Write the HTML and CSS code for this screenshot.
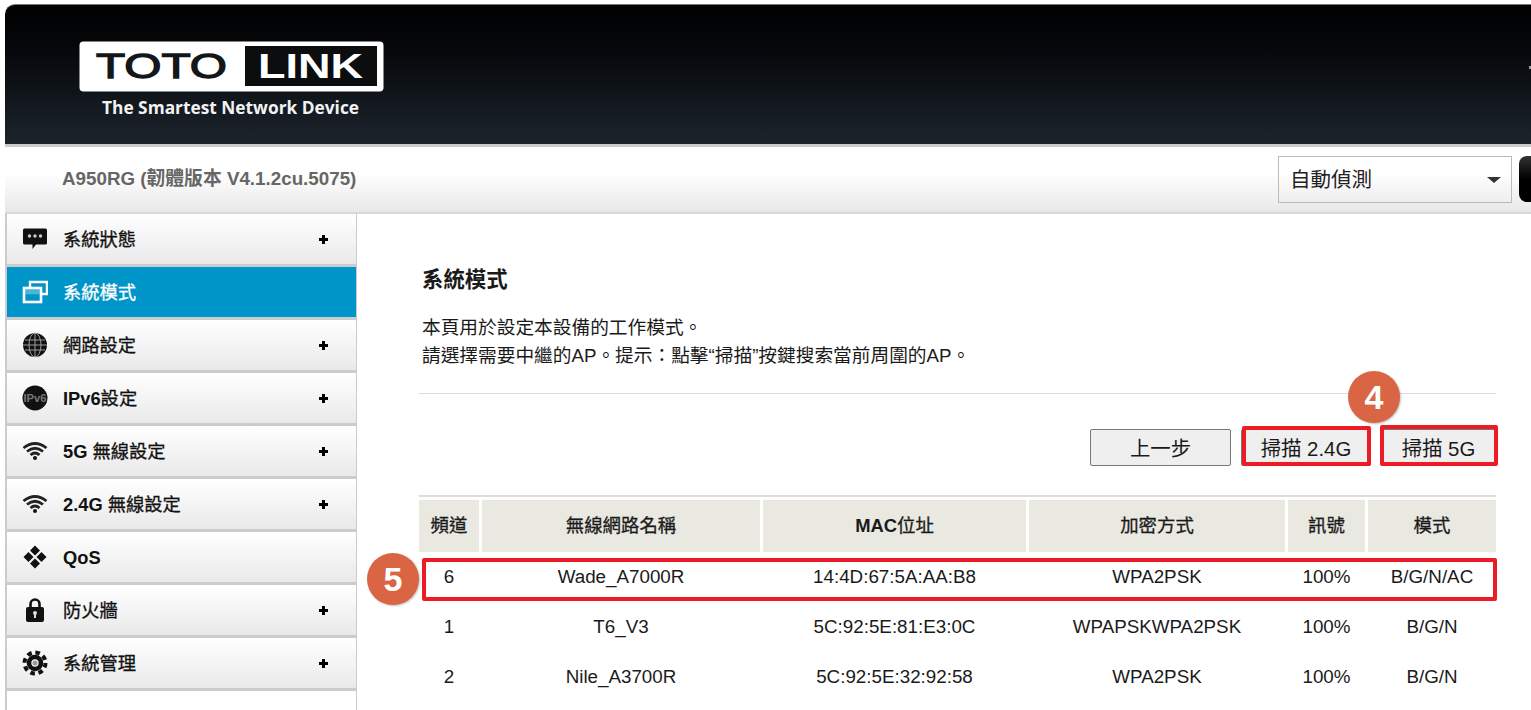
FILE: index.html
```html
<!DOCTYPE html>
<html lang="zh-Hant">
<head>
    <meta charset="UTF-8">
    <title>TOTOLINK A950RG</title>
    <link rel="stylesheet" href="styles.css">
</head>
<body>
<div class="page">
    <header class="top">
        <svg class="logo" width="320" height="84" viewBox="0 0 320 84">
            <rect x="0.5" y="0.5" width="304" height="50" rx="4" fill="#fff"/>
            <rect x="166" y="5" width="132" height="40" fill="#0b0d0f"/>
            <text x="17" y="37" textLength="131" lengthAdjust="spacingAndGlyphs" class="logo-word logo-thin" fill="#14171a" stroke="#14171a">TOTO</text>
            <text x="179" y="37" textLength="105" lengthAdjust="spacingAndGlyphs" class="logo-word" fill="#fff">LINK</text>
            <text x="23" y="73" textLength="257" lengthAdjust="spacingAndGlyphs" class="logo-tag" fill="#f2f2f2">The Smartest Network Device</text>
        </svg>
        <span class="top-mark"></span>
    </header>

    <div class="subbar">
        <span class="version">A950RG (韌體版本 V4.1.2cu.5075)</span>
        <div class="subbar-right">
            <div class="lang">
                <select>
                    <option>自動偵測</option>
                </select>
                <span class="lang-arrow"></span>
            </div>
            <span class="dark-btn"></span>
        </div>
    </div>

    <div class="columns">
        <nav class="menu">
            <a class="menu-item">
                <svg class="icon" viewBox="0 0 26 26"><path d="M2.500 2.500h21a1.500 1.500 0 0 1 1.500 1.500v13a1.500 1.500 0 0 1-1.500 1.500H14l-3.500 4.500v-4.500h-8A1.500 1.500 0 0 1 1 17V4a1.500 1.500 0 0 1 1.500-1.500z"/><g fill="#ccc"><circle cx="7.500" cy="10" r="1.700"/><circle cx="13" cy="10" r="1.700"/><circle cx="18.500" cy="10" r="1.700"/></g></svg>
                <span class="menu-label">系統狀態</span><span class="plus"></span>
            </a>
            <a class="menu-item active">
                <svg class="icon" viewBox="0 0 26 26"><g fill="none" stroke="#fff"><path d="M8 8V3h17v12h-5" stroke-width="2.400"/><rect x="2" y="9" width="17" height="14" stroke-width="2.600"/></g><rect x="3.300" y="10.300" width="14.400" height="5" fill="#fff" opacity=".3"/></svg>
                <span class="menu-label">系統模式</span>
            </a>
            <a class="menu-item">
                <svg class="icon" viewBox="0 0 26 26"><circle cx="13" cy="13" r="12"/><g fill="none" stroke="#aaa" stroke-width=".9"><path d="M1 13h24M3 8h20M3 18h20M13 1v24"/><ellipse cx="13" cy="13" rx="6" ry="12"/></g></svg>
                <span class="menu-label">網路設定</span><span class="plus"></span>
            </a>
            <a class="menu-item">
                <svg class="icon" viewBox="0 0 26 26"><circle cx="13" cy="13" r="12.500"/><text x="13" y="17" text-anchor="middle" textLength="23" lengthAdjust="spacingAndGlyphs" class="ipv6-text">IPv6</text></svg>
                <span class="menu-label"><b>IPv6</b>設定</span><span class="plus"></span>
            </a>
            <a class="menu-item">
                <svg class="icon" viewBox="0 0 26 26"><use href="#wifi"/></svg>
                <span class="menu-label"><b>5G</b> 無線設定</span><span class="plus"></span>
            </a>
            <a class="menu-item">
                <svg class="icon" viewBox="0 0 26 26">
                    <g id="wifi">
                        <g fill="none" stroke="#222" stroke-width="2.800">
                            <path d="M1.500 10Q13 1 24.500 10"/>
                            <path d="M5 13.500Q13 7 21 13.500"/>
                            <path d="M8.500 17Q13 13 17.500 17"/>
                        </g>
                        <circle cx="13" cy="20" r="2"/>
                    </g>
                </svg>
                <span class="menu-label"><b>2.4G</b> 無線設定</span><span class="plus"></span>
            </a>
            <a class="menu-item">
                <svg class="icon" viewBox="0 0 26 26"><path d="M13 1.500l5 5-5 5-5-5zM6.500 8l5 5-5 5-5-5zM19.500 8l5 5-5 5-5-5zM13 14.500l5 5-5 5-5-5z"/></svg>
                <span class="menu-label latin"><b>QoS</b></span>
            </a>
            <a class="menu-item">
                <svg class="icon" viewBox="0 0 26 26"><path d="M8.500 11V7a4.500 4.500 0 0 1 9 0v4" fill="none" stroke="#111" stroke-width="2.600"/><rect x="4" y="10" width="18" height="15" rx="2"/><circle cx="13" cy="16" r="2" fill="#ddd"/><rect x="12" y="16" width="2" height="5" fill="#ddd"/></svg>
                <span class="menu-label">防火牆</span><span class="plus"></span>
            </a>
            <a class="menu-item">
                <svg class="icon" viewBox="0 0 26 26"><circle cx="13" cy="13" r="10.500" fill="none" stroke="#111" stroke-width="4" stroke-dasharray="4.600 3.650"/><circle cx="13" cy="13" r="6" fill="none" stroke="#111" stroke-width="4.600"/><circle cx="13" cy="13" r="2.500" fill="#999"/></svg>
                <span class="menu-label">系統管理</span><span class="plus"></span>
            </a>
        </nav>

        <main class="content">
            <h1 class="title">系統模式</h1>
            <p class="intro">本頁用於設定本設備的工作模式。<br>請選擇需要中繼的AP。提示：點擊“掃描”按鍵搜索當前周圍的AP。</p>
            <hr class="rule">

            <div class="toolbar">
                <span class="step step-4">4</span>
                <button class="btn prev">上一步</button>
                <button class="btn scan24">掃描 2.4G<span class="frame"></span></button>
                <button class="btn scan5">掃描 5G<span class="frame"></span></button>
            </div>

            <hr class="rule rule-table">

            <div class="table-wrap">
                <span class="step step-5">5</span>
                <span class="row-frame"></span>
                <table class="ap-table">
                    <colgroup>
                        <col class="c-ch"><col class="c-ssid"><col class="c-mac"><col class="c-enc"><col class="c-sig"><col class="c-mode">
                    </colgroup>
                    <tr>
                        <th>頻道</th><th>無線網路名稱</th><th><b>MAC</b>位址</th><th>加密方式</th><th>訊號</th><th>模式</th>
                    </tr>
                    <tr>
                        <td>6</td><td>Wade_A7000R</td><td>14:4D:67:5A:AA:B8</td><td>WPA2PSK</td><td>100%</td><td>B/G/N/AC</td>
                    </tr>
                    <tr>
                        <td>1</td><td>T6_V3</td><td>5C:92:5E:81:E3:0C</td><td>WPAPSKWPA2PSK</td><td>100%</td><td>B/G/N</td>
                    </tr>
                    <tr>
                        <td>2</td><td>Nile_A3700R</td><td>5C:92:5E:32:92:58</td><td>WPA2PSK</td><td>100%</td><td>B/G/N</td>
                    </tr>
                </table>
            </div>
        </main>
    </div>
</div>
</body>
</html>
```

FILE: styles.css
```css
* {
    box-sizing: border-box;
}

body {
    margin: 0;
    background: #fff;
    color: #1a1a1a;
    font-family: "Liberation Sans", "Noto Sans CJK TC", sans-serif;
}

.page {
    width: 1531px;
    height: 710px;
    padding: 4px 0 0 5px;
    overflow: hidden;
}

/* black header with the logo */
.top {
    position: relative;
    height: 143px;
    padding: 36px 0 0 74px;
    background: linear-gradient(#000 0%, #05070a 30%, #1c242c 100%);
    border-top: 1px solid #777;
    border-bottom: 3px solid #ccc;
    border-top-left-radius: 10px;
}

.logo {
    display: block;
}

.logo-word {
    font-family: "Liberation Sans", sans-serif;
    font-size: 35px;
    font-weight: bold;
}

.logo-thin {
    font-weight: normal;
    stroke-width: 1.300px;
}

.logo-tag {
    font-family: "Open Sans", sans-serif;
    font-size: 18px;
    font-weight: 700;
}

.top-mark {
    position: absolute;
    right: 0;
    top: 61px;
    width: 2px;
    height: 3px;
    background: #999;
}

/* version bar */
.subbar {
    display: flex;
    align-items: center;
    justify-content: space-between;
    height: 67px;
    padding: 0 0 0 57px;
    background: linear-gradient(#fff 40%, #e8e8e8 100%);
    border-bottom: 2px solid #d8d8d8;
}

.version {
    padding-bottom: 6px;
    color: #666;
    font-size: 18.800px;
    font-weight: bold;
}

.subbar-right {
    display: flex;
    gap: 7px;
    width: 253px;
    margin-top: -1px;
    overflow: hidden;
}

.lang {
    position: relative;
    flex: none;
    width: 234px;
    height: 47px;
}

.lang select {
    width: 100%;
    height: 100%;
    padding: 0 0 0 11px;
    appearance: none;
    background: transparent;
    border: 1px solid #bbb;
    border-radius: 0;
    color: #222;
    font-family: inherit;
    font-size: 20.500px;
}

.lang-arrow {
    position: absolute;
    right: 11px;
    top: 21px;
    border-top: 6px solid #333;
    border-left: 7px solid transparent;
    border-right: 7px solid transparent;
}

.dark-btn {
    flex: none;
    width: 60px;
    height: 46px;
    background: linear-gradient(#333, #000 50%);
    border-radius: 8px;
}

.columns {
    display: flex;
    height: 500px;
}

/* left menu */
.menu {
    flex: none;
    width: 352px;
    height: 500px;
    border-left: 2px solid #ccc;
    border-right: 1px solid #ccc;
}

.menu-item {
    display: flex;
    align-items: center;
    height: 53px;
    padding-left: 15px;
    background: linear-gradient(#fff, #e9e9e9);
    border-bottom: 3px solid #ccc;
    color: #111;
    font-size: 18.300px;
    -webkit-text-stroke: 0.3px currentColor;
}

.menu-item b {
    -webkit-text-stroke: 0;
}

.menu-item.active {
    background: #0095c8;
    color: #fff;
}

.icon {
    flex: none;
    width: 26px;
    height: 26px;
    margin-right: 15px;
    fill: #111;
    -webkit-text-stroke: 0;
}

.ipv6-text {
    fill: #777;
    font-size: 10px;
    font-weight: bold;
}

.menu-label {
    flex: 1;
    padding-bottom: 2px;
}

.menu-label.latin {
    padding: 2px 0 0;
}

.plus {
    flex: none;
    width: 9px;
    height: 9px;
    margin-right: 28px;
    background:
        linear-gradient(#000, #000) center / 9px 3px no-repeat,
        linear-gradient(#000, #000) center / 3px 9px no-repeat;
}

/* main column */
.content {
    flex: none;
    width: 1077px;
    margin-left: 62px;
}

.title {
    margin: 51px 0 0 3px;
    font-size: 21.400px;
    font-weight: bold;
    line-height: 30px;
}

.intro {
    margin: 19px 0 0 3px;
    font-size: 18.700px;
    line-height: 28px;
}

.rule {
    height: 1px;
    margin: 23px 0 0;
    background: #ddd;
    border: 0;
}

.rule-table {
    height: 2px;
    margin: 29px 0 0;
}

.toolbar {
    position: relative;
    display: flex;
    justify-content: flex-end;
    gap: 10px;
    margin-top: 35px;
}

.btn {
    position: relative;
    height: 37px;
    padding: 0 0 2px;
    background: #efefef;
    border: 1px solid #777;
    border-radius: 2px;
    color: #1a1a1a;
    font-family: inherit;
    font-size: 20.400px;
}

.prev {
    width: 141px;
}

.scan24 {
    width: 130px;
}

.scan5 {
    width: 115px;
}

/* red annotation frames and numbered circles */
.frame {
    position: absolute;
    inset: -4px -1px -1px 0;
    border: 4px solid #ed1c24;
    border-radius: 2px;
}

.scan5 .frame {
    inset: -5px -3px -1px -2px;
}

.row-frame {
    position: absolute;
    left: 3px;
    right: -1px;
    top: 58px;
    height: 43px;
    border: 4px solid #ed1c24;
    border-radius: 2px;
}

.step {
    position: absolute;
    z-index: 2;
    width: 52px;
    height: 52px;
    background: #d96545;
    border-radius: 50%;
    box-shadow: 1px 1px 2px rgba(0, 0, 0, 0.25);
    color: #fff;
    font-size: 34px;
    font-weight: bold;
    line-height: 52px;
    text-align: center;
}

.step-4 {
    right: 96px;
    top: -58px;
}

.step-5 {
    left: -52px;
    top: 53px;
}

.table-wrap {
    position: relative;
    margin-top: 3px;
}

.ap-table {
    width: 1083px;
    margin: 0 -3px;
    table-layout: fixed;
    border-collapse: separate;
    border-spacing: 3px 0;
}

.c-ch {
    width: 60px;
}

.c-ssid {
    width: 278px;
}

.c-mac {
    width: 263px;
}

.c-enc {
    width: 256px;
}

.c-sig {
    width: 77px;
}

.c-mode {
    width: 128px;
}

.ap-table th {
    height: 52px;
    padding: 0 0 4px;
    background: #e9e8e1;
    font-size: 18.400px;
    font-weight: normal;
    -webkit-text-stroke: 0.3px currentColor;
}

.ap-table th b {
    -webkit-text-stroke: 0;
}

.ap-table td {
    height: 50px;
    padding: 0;
    font-size: 18.800px;
    text-align: center;
}
```
